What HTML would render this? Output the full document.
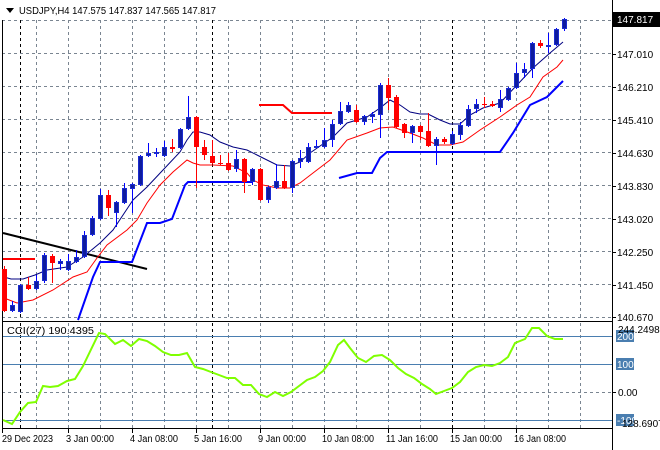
<!DOCTYPE html>
<html><head><meta charset="utf-8"><style>
html,body{margin:0;padding:0;background:#fff;}
svg{display:block;}
text{font-family:"Liberation Sans",sans-serif;font-size:10px;fill:#000;}
</style></head><body>
<svg width="660" height="450" viewBox="0 0 660 450" xmlns="http://www.w3.org/2000/svg">
<rect width="660" height="450" fill="#fff"/>
<g stroke="#7a8591" stroke-width="1" stroke-dasharray="3,3" fill="none">
<path d="M2 20.5H612M2 53.5H612M2 86.5H612M2 119.5H612M2 152.5H612M2 185.5H612M2 218.5H612M2 251.5H612M2 284.5H612M2 317.5H612M2 392.5H612"/>
<path d="M36.5 20V320M68.5 20V320M100.5 20V320M132.5 20V320M164.5 20V320M196.5 20V320M228.5 20V320M260.5 20V320M292.5 20V320M324.5 20V320M356.5 20V320M388.5 20V320M420.5 20V320M484.5 20V320M516.5 20V320M548.5 20V320M580.5 20V320"/>
<path d="M36.5 323V428M68.5 323V428M100.5 323V428M132.5 323V428M164.5 323V428M196.5 323V428M228.5 323V428M260.5 323V428M292.5 323V428M324.5 323V428M356.5 323V428M388.5 323V428M420.5 323V428M484.5 323V428M516.5 323V428M548.5 323V428M580.5 323V428"/>
</g>
<g stroke="#000" stroke-width="1" stroke-dasharray="3,3">
<path d="M20.5 20V320M212.5 20V320M452.5 20V320M20.5 323V428M212.5 323V428M452.5 323V428"/>
</g>
<g stroke="#4a7eb0" stroke-width="1"><path d="M2 336.5H612M2 364.5H612M2 420.5H612"/></g>
<g stroke="#000" fill="none" stroke-width="1">
<path d="M2.5 20V321M612.5 0V450"/>
<rect x="2.5" y="321.5" width="610" height="107"/>
</g>
<polyline fill="none" stroke="#000" stroke-width="2" points="3,233 147,269"/>
<g fill="none" stroke="#ff0000" stroke-width="2">
<polyline points="3,259 35,259"/>
<polyline points="259,105 283,105 292,113 332,113"/>
</g>
<g fill="none" stroke="#0000ff" stroke-width="2">
<polyline points="78,320 93,277 100,262 132,262 147,223 160,223 172,219 185,185 188,182 253,182"/>
<polyline points="339,178 357,173 372,173 380,158 387,152 500,152 513,133 530,105 547,97 563,81"/>
</g>
<polyline fill="none" stroke="#000080" stroke-width="1" points="4,277 11,279 23,279 35,275 47,270 67,267 83,257 100,243 113,230 133,200 147,187 163,170 180,152 187,140 193,132 200,132 210,135 220,142 233,147 247,150 257,155 267,160 277,165 290,166 300,162 310,153 333,137 347,123 367,117 380,108 390,100 400,105 410,112 420,114 428,114 440,120 450,124 460,124 470,115 483,108 500,103 517,85 533,68 550,53 563,42"/>
<polyline fill="none" stroke="#ff0000" stroke-width="1" points="4,298 17,303 33,300 53,290 73,277 87,272 97,258 107,245 127,230 137,220 147,203 160,185 173,172 187,160 193,163 200,165 213,165 233,166 247,173 253,180 263,185 277,188 290,188 300,183 313,173 330,160 347,140 367,133 380,128 393,127 410,133 423,138 437,145 450,145 463,142 480,130 500,117 517,105 530,97 543,77 557,67 563,60"/>
<g>
<g stroke="#ff0000" fill="#ff0000">
<path d="M4.5 266V312M28.5 277V290M52.5 254V283M108.5 190V216M172.5 139V152M196.5 116V188M204.5 140V160M212.5 140V164M220.5 155V165M228.5 153V171M244.5 158V193M260.5 168V201M284.5 165V189M356.5 105V123M388.5 78V110M396.5 95V128M404.5 123V138M420.5 125V140M428.5 113V147M444.5 137V144M484.5 97V108M492.5 101V107M540.5 40V48"/>
</g>
<g fill="#ff0000">
<rect x="2" y="269" width="5" height="42"/><rect x="26" y="285" width="5" height="4"/><rect x="50" y="256" width="5" height="7"/><rect x="106" y="195" width="5" height="13"/><rect x="170" y="147" width="5" height="2"/><rect x="194" y="117" width="5" height="30"/><rect x="202" y="147" width="5" height="8"/><rect x="210" y="156" width="5" height="7"/><rect x="218" y="163" width="5" height="1"/><rect x="226" y="163" width="5" height="7"/><rect x="242" y="159" width="5" height="23"/><rect x="258" y="169" width="5" height="31"/><rect x="282" y="181" width="5" height="7"/><rect x="354" y="110" width="5" height="12"/><rect x="386" y="85" width="5" height="13"/><rect x="394" y="97" width="5" height="30"/><rect x="402" y="124" width="5" height="9"/><rect x="418" y="126" width="5" height="6"/><rect x="426" y="131" width="5" height="15"/><rect x="442" y="139" width="5" height="3"/><rect x="482" y="104" width="5" height="1"/><rect x="490" y="104" width="5" height="2"/><rect x="538" y="43" width="5" height="3"/>
</g>
<g stroke="#0000ff">
<path d="M12.5 301V312M20.5 284V313M36.5 275V290M44.5 253V283M60.5 259V270M68.5 254V271M76.5 250V263M84.5 231V258M92.5 216V236M100.5 189V220M116.5 201V227M124.5 183V204M132.5 183V213M140.5 155V186M148.5 143V157M156.5 148V157M164.5 141V157M180.5 128V149M188.5 96V130M236.5 150V172M252.5 168V185M268.5 186V203M276.5 164V189M292.5 160V193M300.5 150V168M308.5 143V163M316.5 140V148M324.5 128V148M332.5 120V147M340.5 102V125M348.5 102V113M364.5 115V125M372.5 112V123M380.5 83V138M412.5 125V143M436.5 137V165M452.5 131V145M460.5 122V140M468.5 105V127M476.5 99V113M500.5 90V112M508.5 87V101M516.5 63V89M524.5 63V78M532.5 42V78M548.5 33V53M556.5 28V46M564.5 18V31"/>
</g>
<g fill="#0e1b9e" stroke="#1a2bd0" stroke-width="1">
<rect x="10.5" y="305.5" width="4" height="5"/><rect x="18.5" y="285.5" width="4" height="26"/><rect x="34.5" y="281.5" width="4" height="7"/><rect x="42.5" y="255.5" width="4" height="25"/><rect x="58.5" y="261.5" width="4" height="2"/><rect x="66.5" y="261.5" width="4" height="8"/><rect x="74.5" y="257.5" width="4" height="4"/><rect x="82.5" y="235.5" width="4" height="21"/><rect x="90.5" y="218.5" width="4" height="16"/><rect x="98.5" y="195.5" width="4" height="23"/><rect x="114.5" y="202.5" width="4" height="10"/><rect x="122.5" y="188.5" width="4" height="14"/><rect x="130.5" y="184.5" width="4" height="4"/><rect x="138.5" y="156.5" width="4" height="28"/><rect x="146.5" y="153.5" width="4" height="2"/><rect x="154.5" y="152.5" width="4" height="1"/><rect x="162.5" y="147.5" width="4" height="8"/><rect x="178.5" y="129.5" width="4" height="18"/><rect x="186.5" y="117.5" width="4" height="11"/><rect x="234.5" y="159.5" width="4" height="9"/><rect x="250.5" y="169.5" width="4" height="12"/><rect x="266.5" y="187.5" width="4" height="12"/><rect x="274.5" y="181.5" width="4" height="6"/><rect x="290.5" y="161.5" width="4" height="26"/><rect x="298.5" y="158.5" width="4" height="3"/><rect x="306.5" y="147.5" width="4" height="14"/><rect x="314.5" y="146.5" width="4" height="1"/><rect x="322.5" y="140.5" width="4" height="6"/><rect x="330.5" y="124.5" width="4" height="15"/><rect x="338.5" y="111.5" width="4" height="12"/><rect x="346.5" y="105.5" width="4" height="6"/><rect x="362.5" y="116.5" width="4" height="5"/><rect x="370.5" y="114.5" width="4" height="2"/><rect x="378.5" y="85.5" width="4" height="29"/><rect x="410.5" y="126.5" width="4" height="6"/><rect x="434.5" y="139.5" width="4" height="6"/><rect x="450.5" y="134.5" width="4" height="9"/><rect x="458.5" y="125.5" width="4" height="9"/><rect x="466.5" y="109.5" width="4" height="16"/><rect x="474.5" y="104.5" width="4" height="4"/><rect x="498.5" y="99.5" width="4" height="8"/><rect x="506.5" y="88.5" width="4" height="11"/><rect x="514.5" y="73.5" width="4" height="14"/><rect x="522.5" y="69.5" width="4" height="3"/><rect x="530.5" y="43.5" width="4" height="25"/><rect x="546.5" y="45.5" width="4" height="1"/><rect x="554.5" y="29.5" width="4" height="15"/><rect x="562.5" y="19.5" width="4" height="9"/>
</g>
</g>
<polyline fill="none" stroke="#7fff00" stroke-width="2" points="3,420 12,424 20,412 28,403 36,402 43,386 50,387 58,386 67,381 75,379 83,366 99,333 105,334 115,344 123,340 131,346 139,339 147,341 155,346 163,352 171,355 179,355 187,353 195,367 203,369 211,372 219,375 227,378 235,378 243,385 251,385 259,394 267,397 275,392 283,396 291,392 299,386 307,380 315,377 323,371 330,362 338,345 344,340 350,348 358,358 366,362 374,356 382,355 390,360 398,368 406,374 414,378 422,384 430,389 436,394 444,391 452,388 460,382 468,372 476,367 484,365 492,366 500,363 508,357 515,343 525,339 532,328 539,328 547,336 555,339 563,339"/>
<path d="M6 8 L14 8 L10 13 Z" fill="#000"/>
<text x="19" y="14" textLength="197" lengthAdjust="spacingAndGlyphs">USDJPY,H4  147.575 147.837 147.565 147.817</text>
<text x="7" y="334" textLength="87" lengthAdjust="spacingAndGlyphs">CCI(27) 190.4395</text>
<g>
<text x="617" y="58">147.010</text>
<text x="617" y="91">146.210</text>
<text x="617" y="124">145.410</text>
<text x="617" y="157">144.630</text>
<text x="617" y="190">143.830</text>
<text x="617" y="223">143.020</text>
<text x="617" y="256">142.250</text>
<text x="617" y="289">141.450</text>
<text x="617" y="321">140.670</text>
</g>
<g stroke="#000"><path d="M612 54.5H616M612 87.5H616M612 120.5H616M612 153.5H616M612 186.5H616M612 219.5H616M612 252.5H616M612 285.5H616M612 317.5H616M612 392.5H616"/></g>
<rect x="613" y="12" width="47" height="15" fill="#000"/>
<text x="617" y="23" style="fill:#fff">147.817</text>
<rect x="616" y="330" width="18" height="12" fill="#4a7eb0"/>
<rect x="616" y="358" width="18" height="12" fill="#4a7eb0"/>
<rect x="616" y="414" width="18" height="12" fill="#4a7eb0"/>
<text x="618" y="333">244.2498</text>
<text x="617" y="340" style="fill:#fff">200</text>
<text x="617" y="368" style="fill:#fff">100</text>
<text x="618" y="396">0.00</text>
<text x="617" y="424" style="fill:#fff">-100</text>
<text x="622" y="427">128.6907</text>
<g stroke="#000"><path d="M2.5 428V433M68.5 428V433M132.5 428V433M196.5 428V433M260.5 428V433M324.5 428V433M388.5 428V433M452.5 428V433M516.5 428V433"/></g>
<text x="2" y="442" textLength="51" lengthAdjust="spacingAndGlyphs">29 Dec 2023</text>
<text x="66" y="442" textLength="48" lengthAdjust="spacingAndGlyphs">3 Jan 00:00</text>
<text x="130" y="442" textLength="48" lengthAdjust="spacingAndGlyphs">4 Jan 08:00</text>
<text x="194" y="442" textLength="48" lengthAdjust="spacingAndGlyphs">5 Jan 16:00</text>
<text x="258" y="442" textLength="48" lengthAdjust="spacingAndGlyphs">9 Jan 00:00</text>
<text x="322" y="442" textLength="52" lengthAdjust="spacingAndGlyphs">10 Jan 08:00</text>
<text x="386" y="442" textLength="52" lengthAdjust="spacingAndGlyphs">11 Jan 16:00</text>
<text x="450" y="442" textLength="52" lengthAdjust="spacingAndGlyphs">15 Jan 00:00</text>
<text x="514" y="442" textLength="52" lengthAdjust="spacingAndGlyphs">16 Jan 08:00</text>
</svg>
</body></html>
